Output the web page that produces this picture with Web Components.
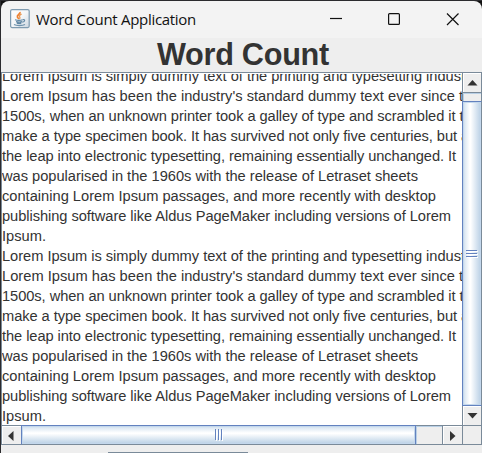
<!DOCTYPE html>
<html lang="en">
<head>
<meta charset="utf-8">
<title>Word Count Application</title>
<style>html,body{margin:0;height:100%;overflow:hidden;background:#111}</style>
</head>
<body>
<app-window>
  <title-bar slot="bar">Word Count Application</title-bar>
  <fit-line slot="heading" w="172">Word Count</fit-line>
  <scroll-pane>
    <lorem-text></lorem-text>
    <lorem-text></lorem-text>
  </scroll-pane>
</app-window>
<script>
const attach = (el, html) => { el.attachShadow({mode:'open'}).innerHTML = html; };

customElements.define('java-icon', class extends HTMLElement {
  constructor() {
    super();
    attach(this, `<style>:host{display:block;width:20px;height:20px}svg{display:block}</style>
    <svg width="20" height="20" viewBox="1 0 20 20" fill="none">
      <defs><linearGradient id="g" x1="0" y1="0" x2="1" y2="1"><stop offset="0" stop-color="#fff"/><stop offset=".5" stop-color="#f4f6f8"/><stop offset="1" stop-color="#cbd6e0"/></linearGradient></defs>
      <rect x="1.600" y=".6" width="18.600" height="18" rx="1.5" fill="url(#g)" stroke="#7f9bb0" stroke-width="1.2"/>
      <path d="M11 3c.8 2-3.400 3-2.600 5 .3.800 1 1.300 1.500 2" stroke="#ee8233" stroke-width="1.700"/>
      <path d="M12.600 5.200c-2 .8-2.700 1.800-1.900 2.800.5.700.4 1.300-.3 2" stroke="#e89a58" stroke-width="1.300"/>
      <path d="M6 10.800c2 .7 5.700.7 7.700 0M7 12.600c2 .6 4.400.6 6.300 0M7.800 14.200c1.500.4 3.100.4 4.500 0" stroke="#5f86a4" stroke-width="1.200"/>
      <path d="M13.800 10.700c2.600-.6 2.600 2-.5 2.600" stroke="#5f86a4" stroke-width="1.100"/>
      <path d="M5 15.500c2.500 1.400 8.500 1.300 11 0" stroke="#6f92ad" stroke-width="1.300"/>
    </svg>`);
  }
});

customElements.define('title-bar', class extends HTMLElement {
  constructor() {
    super();
    attach(this, `<style>
      :host{display:flex;align-items:center;height:37px;box-sizing:border-box;background:#f3f3f3;padding-left:9px;border-radius:8px 8px 0 0;font:15px "Open Sans","Noto Sans",sans-serif;color:#111}
      java-icon{margin-right:6px;margin-bottom:1px}
      .t{flex:1;white-space:nowrap;margin-top:-1px}
      svg{display:block}
    </style>
    <java-icon></java-icon><div class="t"></div>
    <svg width="153" height="37" fill="none" stroke="#111" stroke-width="1.200">
      <path d="M1 17.500h12"/><rect x="59.600" y="12.600" width="10.800" height="10.800" rx="1"/><path d="M118 12.500l11.500 11.500M129.500 12.500l-11.500 11.500"/>
    </svg>`);
  }
  connectedCallback() {
    this.shadowRoot.querySelector('.t').innerHTML = `<fit-line w="160">${this.textContent}</fit-line>`;
  }
});

customElements.define('lorem-text', class extends HTMLElement {
  constructor() {
    super();
    const lines = [
      ['Lorem Ipsum is simply dummy text of the printing and typesetting indus', 459, 't'],
      ['Lorem Ipsum has been the industry\'s standard dummy text ever since', 453, ' t'],
      ['1500s, when an unknown printer took a galley of type and scrambled it', 453.5, ' t'],
      ['make a type specimen book. It has survived not only five centuries, but', 455, ' a'],
      ['the leap into electronic typesetting, remaining essentially unchanged. It', 454, ''],
      ['was popularised in the 1960s with the release of Letraset sheets', 416, ''],
      ['containing Lorem Ipsum passages, and more recently with desktop', 434, ''],
      ['publishing software like Aldus PageMaker including versions of Lorem', 449, ''],
      ['Ipsum.', 44, '']];
    attach(this, `<style>:host{display:block}div{display:flex;height:20px;white-space:pre}</style>` +
      lines.map(([t, w, r]) => `<div><fit-line w="${w}">${t}</fit-line><span>${r}</span></div>`).join(''));
  }
});

customElements.define('scroll-button', class extends HTMLElement {
  connectedCallback() {
    if (this.shadowRoot) return;
    const p = {up:'M8.500 6l5 5.500h-10z', down:'M3.500 6h10l-5 5.500z', left:'M10.500 4v10l-5.500-5z', right:'M6 4v10l5.500-5z'}[this.getAttribute('dir')];
    attach(this, `<style>:host{display:block;box-sizing:border-box;background:#eee;border-left:1px solid #fff;border-top:1px solid #fff;overflow:hidden}svg{display:block}</style>
      <svg width="18" height="18"><path d="${p}" fill="#333"/></svg>`);
  }
});

customElements.define('scroll-thumb', class extends HTMLElement {
  connectedCallback() {
    if (this.shadowRoot) return;
    const v = this.hasAttribute('vertical');
    attach(this, `<style>
      :host{display:flex;align-items:center;justify-content:center;box-sizing:border-box;
        border:1px solid #6382bf;${v ? 'border-right-color:#7a8a99' : 'border-bottom-color:#7a8a99'};
        background:linear-gradient(${v ? '90deg' : '180deg'},#c8daeb 0,#dfeaf4 12%,#fff 38%,#fff 42%,#b8cfe5 100%);
        box-shadow:inset 0 0 0 1px #c3d7ec}
      svg{display:block}
    </style>` + (v
      ? `<svg width="12" height="8"><path d="M0 .5h11M0 3.500h11M0 6.500h11" stroke="#6382bf"/><path d="M1 1.500h11M1 4.500h11M1 7.500h11" stroke="#fff"/></svg>`
      : `<svg width="8" height="12"><path d="M.5 0v11M3.500 0v11M6.500 0v11" stroke="#6382bf"/><path d="M1.500 1v11M4.500 1v11M7.500 1v11" stroke="#fff"/></svg>`));
  }
});

customElements.define('scroll-pane', class extends HTMLElement {
  constructor() {
    super();
    attach(this, `<style>
      :host{display:grid;box-sizing:border-box;height:373px;grid-template-columns:460px 20px;grid-template-rows:352px 20px;
        border-top:1px solid #7a8a99;border-left:1px solid #7a8a99;background:#eee}
      .view{background:#fff;overflow:hidden;font:14.670px/20px "Liberation Sans",Arial,sans-serif;color:#333;border-top:1px solid #fff;box-sizing:border-box}
      .text{margin-top:-8px}
      .v{display:grid;grid-template-rows:19px 1px 8px 305px 19px;border-left:1px solid #7a8a99;border-right:1px solid #7a8a99;box-sizing:border-box}
      .h{display:grid;grid-template-columns:19px 395px 26px 1px 19px;border-top:1px solid #7a8a99;border-bottom:1px solid #7a8a99;box-sizing:border-box}
      .v scroll-thumb{margin:0 -1px}
      .h scroll-thumb{margin:-1px 0}
      .line{background:#7a8a99}
      .track{box-shadow:inset 1px 1px #b8cfe5}
      .corner{border:1px solid #7a8a99;box-sizing:border-box}
    </style>
    <div class="view"><div class="text"><slot></slot></div></div>
    <div class="v"><scroll-button dir="up"></scroll-button><div class="line"></div><div class="track"></div><scroll-thumb vertical></scroll-thumb><scroll-button dir="down"></scroll-button></div>
    <div class="h"><scroll-button dir="left"></scroll-button><scroll-thumb></scroll-thumb><div class="track"></div><div class="line"></div><scroll-button dir="right"></scroll-button></div>
    <div class="corner"></div>`);
  }
});

customElements.define('app-window', class extends HTMLElement {
  constructor() {
    super();
    attach(this, `<style>
      :host{display:block;width:482px;height:453px;box-sizing:border-box;border-left:1px solid #2b2b2e;border-top:1px solid #2b2b2e;overflow:hidden;background:#111}
      .body{background:#eee;height:415px}
      .head{display:flex;justify-content:center;height:34px;padding-left:3px;font:bold 30.670px/33px "Liberation Sans",Arial,sans-serif;color:#333}
      .foot{height:7px}
      .field{width:140px;height:1px;margin-left:107px;background:#7a8a99}
    </style>
    <slot name="bar"></slot>
    <div class="body"><div class="head"><slot name="heading"></slot></div><slot></slot><div class="foot"></div><div class="field"></div></div>`);
  }
});

/* A single line of text tracked to a given width. Defined last, so that every
   ancestor already supplies its font when the line is measured. */
customElements.define('fit-line', class extends HTMLElement {
  connectedCallback() {
    if (this.shadowRoot) return;
    attach(this, `<style>:host{display:block;white-space:pre}span{display:inline-block}</style><span><slot></slot></span>`);
    const s = this.shadowRoot.querySelector('span');
    const n = this.textContent.length, w = +this.getAttribute('w');
    s.style.letterSpacing = (w - s.getBoundingClientRect().width) / n + 'px';
  }
});
</script>
</body>
</html>
